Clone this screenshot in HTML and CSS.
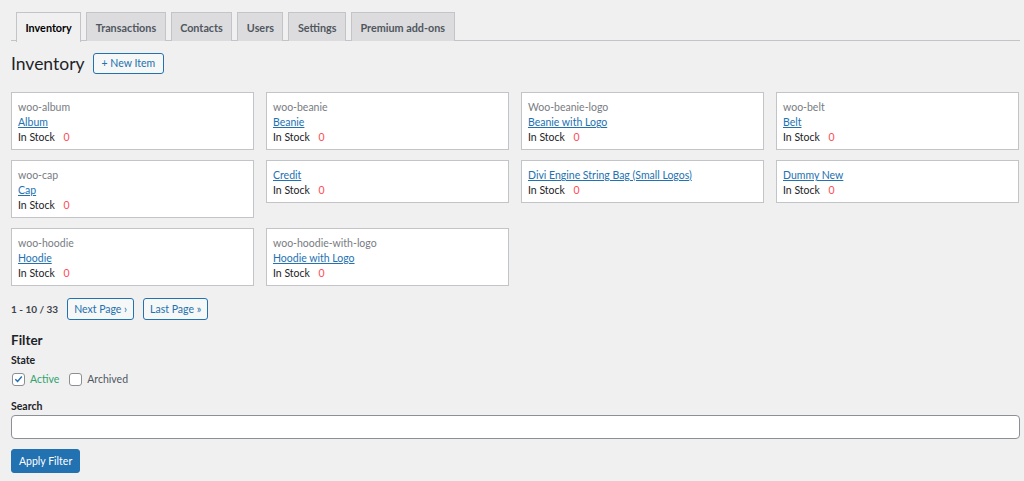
FILE: index.html
```html
<!DOCTYPE html>
<html>
<head>
<meta charset="utf-8">
<link rel="stylesheet" href="styles.css">
</head>
<body>
<div class="wrap">
  <nav class="tabs">
    <a class="tab active">Inventory</a>
    <a class="tab">Transactions</a>
    <a class="tab">Contacts</a>
    <a class="tab">Users</a>
    <a class="tab">Settings</a>
    <a class="tab">Premium add-ons</a>
  </nav>
  <div class="head">
    <h1 class="title">Inventory</h1>
    <button class="btn">+ New Item</button>
  </div>
  <div class="grid">
    <div class="card"><div class="sku">woo-album</div><a class="name">Album</a><div class="stock">In Stock <span class="qty">0</span></div></div>
    <div class="card"><div class="sku">woo-beanie</div><a class="name">Beanie</a><div class="stock">In Stock <span class="qty">0</span></div></div>
    <div class="card"><div class="sku">Woo-beanie-logo</div><a class="name">Beanie with Logo</a><div class="stock">In Stock <span class="qty">0</span></div></div>
    <div class="card"><div class="sku">woo-belt</div><a class="name">Belt</a><div class="stock">In Stock <span class="qty">0</span></div></div>
    <div class="card"><div class="sku">woo-cap</div><a class="name">Cap</a><div class="stock">In Stock <span class="qty">0</span></div></div>
    <div class="card"><a class="name">Credit</a><div class="stock">In Stock <span class="qty">0</span></div></div>
    <div class="card"><a class="name">Divi Engine String Bag (Small Logos)</a><div class="stock">In Stock <span class="qty">0</span></div></div>
    <div class="card"><a class="name">Dummy New</a><div class="stock">In Stock <span class="qty">0</span></div></div>
    <div class="card"><div class="sku">woo-hoodie</div><a class="name">Hoodie</a><div class="stock">In Stock <span class="qty">0</span></div></div>
    <div class="card"><div class="sku">woo-hoodie-with-logo</div><a class="name">Hoodie with Logo</a><div class="stock">In Stock <span class="qty">0</span></div></div>
  </div>
  <div class="pager">
    <span class="count">1 - 10 / 33</span>
    <button class="btn">Next Page ›</button>
    <button class="btn">Last Page »</button>
  </div>
  <h2 class="filter-title">Filter</h2>
  <div class="label">State</div>
  <div class="checks">
    <label class="check on"><span class="box"><svg viewBox="0 0 12 12" width="12" height="12"><path d="M2.5 6.2 L5 8.6 L9.6 3.2" fill="none" stroke="#2271b1" stroke-width="1.6"/></svg></span>Active</label>
    <label class="check"><span class="box"></span>Archived</label>
  </div>
  <div class="label search-label">Search</div>
  <div class="input"></div>
  <button class="btn primary">Apply Filter</button>
</div>
</body>
</html>
```
FILE: styles.css
```css
* { box-sizing: border-box; }
body {
  margin: 0;
  background: #f0f0f1;
  font-family: Lato, "Noto Sans", sans-serif;
  font-size: 10.5px;
  color: #1d2327;
}
.wrap { padding: 12px 4px 0 11px; }
.tabs {
  display: flex;
  gap: 5px;
  padding-left: 5px;
  border-bottom: 1px solid #c3c4c7;
  height: 29px;
}
.tab {
  display: flex;
  align-items: center;
  height: 29px;
  padding: 0 8.5px;
  background: #dcdcde;
  border: 1px solid #c3c4c7;
  border-bottom: none;
  font-weight: 700;
  font-size: 10.8px;
  color: #50575e;
}
.tab.active {
  background: #f0f0f1;
  color: #000;
  margin-bottom: -1px;
  padding-bottom: 1px;
  height: 30px;
}
.head {
  display: flex;
  align-items: center;
  gap: 8px;
  margin-top: 11px;
  height: 22px;
}
.title {
  margin: 0;
  font-size: 17.5px;
  font-weight: 400;
  color: #1d2327;
}
.btn {
  font-family: inherit;
  font-size: 10.5px;
  color: #2271b1;
  background: #f6f7f7;
  border: 1px solid #2271b1;
  border-radius: 3px;
  height: 22px;
  padding: 0 6px;
  cursor: pointer;
}
.head .btn { padding: 0 8px; height: 21px; }
.grid {
  display: grid;
  grid-template-columns: repeat(4, 243px);
  column-gap: 12px;
  row-gap: 10px;
  align-items: start;
  margin-top: 18px;
}
.card {
  background: #fff;
  border: 1px solid #c3c4c7;
  padding: 7px 6px 4px;
  line-height: 15px;
}
.sku { color: #787c82; }
.name { display: block; color: #2271b1; text-decoration: underline; width: max-content; }
.stock { color: #1d2327; }
.qty { color: #ff4b55; margin-left: 6px; }
.pager {
  display: flex;
  align-items: center;
  gap: 9px;
  margin-top: 12px;
}
.count { font-weight: 700; font-size: 10px; color: #3c434a; }
.filter-title {
  margin: 11px 0 0;
  font-size: 13.5px;
  font-weight: 700;
  color: #1d2327;
  line-height: 18px;
}
.label {
  font-weight: 700;
  color: #1d2327;
  margin-top: 3px;
  line-height: 16px;
}
.checks { display: flex; gap: 9px; margin-top: 3px; }
.check { display: flex; align-items: center; gap: 5px; color: #50575e; line-height: 16px; }
.check.on { color: #2fa36b; }
.box {
  width: 13px; height: 13px;
  border: 1px solid #8c8f94;
  border-radius: 3px;
  background: #fff;
  display: flex; align-items: center; justify-content: center;
  margin-left: 1px;
}
.search-label { margin-top: 11px; }
.input {
  margin-top: 1px;
  height: 24px;
  width: 1009px;
  background: #fff;
  border: 1px solid #8c8f94;
  border-radius: 4px;
}
.btn.primary {
  margin-top: 10px;
  background: #2271b1;
  color: #fff;
  height: 24px;
  padding: 0 7px;
  font-size: 10.5px;
}
```
